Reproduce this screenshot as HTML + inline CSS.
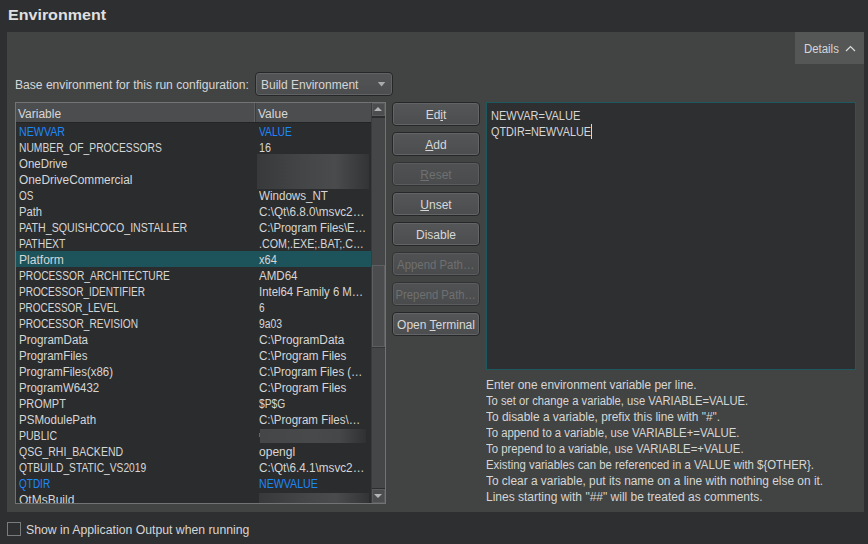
<!DOCTYPE html>
<html><head><meta charset="utf-8">
<style>
*{box-sizing:border-box;margin:0;padding:0}
html,body{width:868px;height:544px;overflow:hidden;background:#2e2f30;font-family:"Liberation Sans",sans-serif;font-size:12px;color:#d6d6d6}
.abs{position:absolute}
.t{position:absolute;white-space:pre;line-height:16px;height:16px;transform-origin:0 0}
#title{left:8px;top:6px;font-size:15.5px;font-weight:bold;line-height:18px;color:#e0e0e0;transform:scaleX(1.035)}
#panel{left:7px;top:32px;width:857px;height:480px;background:#424443}
#details{left:795px;top:32px;width:69px;height:32px;background:#555756}
#combo{left:255px;top:72px;width:138px;height:24px;border:1px solid #262728;border-radius:4px;background:linear-gradient(#535455,#4c4d4e);box-shadow:inset 0 0 0 1px #616263}
#table{left:15px;top:102px;width:371px;height:402px;border:1px solid #727374;background:#2b2c2d;overflow:hidden}
#hdr{left:0;top:0;width:355px;height:20px;background:#4c4d4e;border-bottom:1px solid #232425}
#hdiv{left:238px;top:0;width:2px;height:19px;border-left:1px solid #5e5f60;border-right:1px solid #3c3d3e}
#sel{left:0;top:148px;width:355px;height:16px;background:#1d545c}
#vsb{left:355px;top:0;width:14px;height:400px;background:#454647;border-left:1px solid #3a3b3c}
#thumb{left:0;top:162px;width:13px;height:82px;background:#4b4c4d;border:1px solid #5e5f60;box-shadow:0 1px 0 #333435}
#upb,#dnb{left:0;width:13px;height:13px;background:#4c4d4e;border:1px solid #5a5b5c}
#upb{top:0;box-shadow:0 2px 0 #2c2d2e}
#dnb{top:386px;height:14px;box-shadow:0 -1px 0 #2c2d2e}
.blur{position:absolute;background:linear-gradient(90deg,#38393a 0%,#444546 40%,#4a4b4c 70%,#333435 100%)}
.btn{position:absolute;left:392px;width:88px;height:24px;border:1px solid #262728;border-radius:4px;background:linear-gradient(#555657,#4c4d4e);box-shadow:inset 0 0 0 1px #636465;text-align:center;line-height:24px;color:#d8d8d8}
.btn.dis{color:#6f7071;background:linear-gradient(#505152,#4a4b4c);box-shadow:inset 0 0 0 1px #5b5c5d;border-color:#323334}
#editor{left:486px;top:102px;width:370px;height:268px;border:1px solid #1f5960;background:#2e2f30}
.blue{color:#1e88f8}
u{text-decoration:underline;text-underline-offset:1px;text-decoration-thickness:1px}
</style></head><body>
<div class="t" id="title">Environment</div>
<div class="abs" id="panel"></div>
<div class="abs" id="details"></div>
<div class="t" style="left:804px;top:41px;transform:scaleX(0.95)">Details</div>
<svg class="abs" style="left:844px;top:43px" width="13" height="10"><path d="M2 8 L6.5 3.5 L11 8" stroke="#dcdcdc" stroke-width="1.2" fill="none"/></svg>

<div class="t" style="left:15px;top:77px;transform:scaleX(1.007)">Base environment for this run configuration:</div>
<div class="abs" id="combo"></div>
<div class="t" style="left:261px;top:77px">Build Environment</div>
<svg class="abs" style="left:377px;top:82px" width="9" height="5"><path d="M0.8 0 H8.3 L4.55 4.5Z" fill="#a9aaab"/></svg>

<div class="abs" id="table">
  <div class="abs" id="hdr"></div>
  <div class="abs" id="hdiv"></div>
  <div class="t" style="left:2px;top:3px;color:#d8d8d8">Variable</div>
  <div class="t" style="left:242px;top:3px;color:#d8d8d8">Value</div>
  <div class="abs" id="sel"></div>
  <div class="blur" style="left:241px;top:51px;width:112px;height:35px"></div>
  <div class="blur" style="left:244px;top:326px;width:106px;height:14px;background:linear-gradient(90deg,#454647 0%,#48494a 50%,#464748 75%,#303132 100%)"></div>
  <div class="abs" style="left:243px;top:330px;width:1px;height:4px;background:#2f6fc4"></div>
  <div class="blur" style="left:243px;top:390px;width:110px;height:12px"></div>
<div class="t blue" style="left:3px;top:21px;transform:scaleX(0.890)">NEWVAR</div>
<div class="t blue" style="left:243px;top:21px;transform:scaleX(0.853)">VALUE</div>
<div class="t" style="left:3px;top:37px;transform:scaleX(0.857)">NUMBER_OF_PROCESSORS</div>
<div class="t" style="left:243px;top:37px;transform:scaleX(0.899)">16</div>
<div class="t" style="left:3px;top:53px;transform:scaleX(0.955)">OneDrive</div>
<div class="t" style="left:3px;top:69px;transform:scaleX(0.989)">OneDriveCommercial</div>
<div class="t" style="left:3px;top:85px;transform:scaleX(0.831)">OS</div>
<div class="t" style="left:243px;top:85px;transform:scaleX(0.966)">Windows_NT</div>
<div class="t" style="left:3px;top:101px;transform:scaleX(0.932)">Path</div>
<div class="t" style="left:243px;top:101px;transform:scaleX(0.975)">C:\Qt\6.8.0\msvc2…</div>
<div class="t" style="left:3px;top:117px;transform:scaleX(0.885)">PATH_SQUISHCOCO_INSTALLER</div>
<div class="t" style="left:243px;top:117px;transform:scaleX(0.944)">C:\Program Files\E…</div>
<div class="t" style="left:3px;top:133px;transform:scaleX(0.866)">PATHEXT</div>
<div class="t" style="left:243px;top:133px;transform:scaleX(0.893)">.COM;.EXE;.BAT;.C…</div>
<div class="t" style="left:3px;top:149px;transform:scaleX(1.005)">Platform</div>
<div class="t" style="left:243px;top:149px;transform:scaleX(0.920)">x64</div>
<div class="t" style="left:3px;top:165px;transform:scaleX(0.851)">PROCESSOR_ARCHITECTURE</div>
<div class="t" style="left:243px;top:165px;transform:scaleX(0.962)">AMD64</div>
<div class="t" style="left:3px;top:181px;transform:scaleX(0.840)">PROCESSOR_IDENTIFIER</div>
<div class="t" style="left:243px;top:181px;transform:scaleX(0.947)">Intel64 Family 6 M…</div>
<div class="t" style="left:3px;top:197px;transform:scaleX(0.827)">PROCESSOR_LEVEL</div>
<div class="t" style="left:243px;top:197px;transform:scaleX(0.839)">6</div>
<div class="t" style="left:3px;top:213px;transform:scaleX(0.846)">PROCESSOR_REVISION</div>
<div class="t" style="left:243px;top:213px;transform:scaleX(0.865)">9a03</div>
<div class="t" style="left:3px;top:229px;transform:scaleX(0.968)">ProgramData</div>
<div class="t" style="left:243px;top:229px;transform:scaleX(0.984)">C:\ProgramData</div>
<div class="t" style="left:3px;top:245px;transform:scaleX(0.959)">ProgramFiles</div>
<div class="t" style="left:243px;top:245px;transform:scaleX(0.971)">C:\Program Files</div>
<div class="t" style="left:3px;top:261px;transform:scaleX(0.952)">ProgramFiles(x86)</div>
<div class="t" style="left:243px;top:261px;transform:scaleX(0.945)">C:\Program Files (…</div>
<div class="t" style="left:3px;top:277px;transform:scaleX(0.954)">ProgramW6432</div>
<div class="t" style="left:243px;top:277px;transform:scaleX(0.971)">C:\Program Files</div>
<div class="t" style="left:3px;top:293px;transform:scaleX(0.912)">PROMPT</div>
<div class="t" style="left:243px;top:293px;transform:scaleX(0.857)">$P$G</div>
<div class="t" style="left:3px;top:309px;transform:scaleX(0.964)">PSModulePath</div>
<div class="t" style="left:243px;top:309px;transform:scaleX(0.961)">C:\Program Files\…</div>
<div class="t" style="left:3px;top:325px;transform:scaleX(0.877)">PUBLIC</div>
<div class="t" style="left:3px;top:341px;transform:scaleX(0.877)">QSG_RHI_BACKEND</div>
<div class="t" style="left:243px;top:341px;transform:scaleX(1.005)">opengl</div>
<div class="t" style="left:3px;top:357px;transform:scaleX(0.854)">QTBUILD_STATIC_VS2019</div>
<div class="t" style="left:243px;top:357px;transform:scaleX(0.975)">C:\Qt\6.4.1\msvc2…</div>
<div class="t blue" style="left:3px;top:373px;transform:scaleX(0.833)">QTDIR</div>
<div class="t blue" style="left:243px;top:373px;transform:scaleX(0.885)">NEWVALUE</div>
<div class="t" style="left:3px;top:389px;transform:scaleX(0.999)">QtMsBuild</div>
  <div class="abs" id="vsb">
    <div class="abs" id="thumb"></div>
    <div class="abs" id="upb"><svg class="abs" style="left:1px;top:3px" width="9" height="5"><path d="M0 4 H8 L4 0Z" fill="#b4b5b6"/></svg></div>
    <div class="abs" id="dnb"><svg class="abs" style="left:1px;top:4px" width="9" height="5"><path d="M0 0 H8 L4 4Z" fill="#b4b5b6"/></svg></div>
  </div>
</div>

<div class="btn" style="top:102px">Ed<u>i</u>t</div>
<div class="btn" style="top:132px"><u>A</u>dd</div>
<div class="btn dis" style="top:162px"><u>R</u>eset</div>
<div class="btn" style="top:192px"><u>U</u>nset</div>
<div class="btn" style="top:222px">Disable</div>
<div class="btn dis" style="top:252px"><span style="display:inline-block;transform:scaleX(0.95)">Append Path…</span></div>
<div class="btn dis" style="top:282px"><span style="display:inline-block;transform:scaleX(0.94)">Prepend Path…</span></div>
<div class="btn" style="top:312px">Open <u>T</u>erminal</div>

<div class="abs" id="editor"></div>
<div class="t" style="left:491px;top:108px;transform:scaleX(0.918)">NEWVAR=VALUE</div>
<div class="t" style="left:491px;top:124px;transform:scaleX(0.903)">QTDIR=NEWVALUE</div>
<div class="abs" style="left:591px;top:124px;width:1px;height:15px;background:#d8d8d8"></div>

<div class="t" style="left:486px;top:377px;transform:scaleX(0.99)">Enter one environment variable per line.</div>
<div class="t" style="left:486px;top:393px;transform:scaleX(0.936)">To set or change a variable, use VARIABLE=VALUE.</div>
<div class="t" style="left:486px;top:409px;transform:scaleX(0.992)">To disable a variable, prefix this line with "#".</div>
<div class="t" style="left:486px;top:425px;transform:scaleX(0.947)">To append to a variable, use VARIABLE+=VALUE.</div>
<div class="t" style="left:486px;top:441px;transform:scaleX(0.948)">To prepend to a variable, use VARIABLE=+VALUE.</div>
<div class="t" style="left:486px;top:457px;transform:scaleX(0.948)">Existing variables can be referenced in a VALUE with ${OTHER}.</div>
<div class="t" style="left:486px;top:473px;transform:scaleX(0.991)">To clear a variable, put its name on a line with nothing else on it.</div>
<div class="t" style="left:486px;top:489px;transform:scaleX(1.0)">Lines starting with "##" will be treated as comments.</div>

<div class="abs" style="left:7px;top:522px;width:14px;height:14px;border:1px solid #7a7b7c"></div>
<div class="t" style="left:26px;top:522px;transform:scaleX(1.021)">Show in Application Output when running</div>
</body></html>
